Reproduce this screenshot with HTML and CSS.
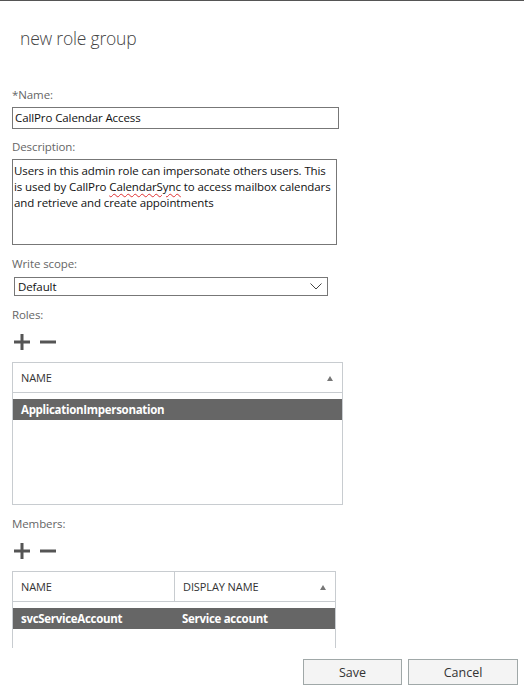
FILE: index.html
```html
<!DOCTYPE html>
<html>
<head>
<meta charset="utf-8">
<link rel="stylesheet" href="styles.css">
</head>
<body>
<div class="page">
  <div class="scroll">
    <h1 class="title">new role group</h1>
    <div class="field">
      <label class="lbl">*Name:</label>
      <div class="input">CallPro Calendar Access</div>
    </div>
    <div class="field desc">
      <label class="lbl">Description:</label>
      <div class="textarea">Users in this admin role can impersonate others users. This is used by CallPro <span class="spell">CalendarSync</span> to access mailbox calendars and retrieve and create appointments</div>
    </div>
    <div class="field">
      <label class="lbl">Write scope:</label>
      <div class="select"><span>Default</span>
        <svg class="chev" width="12" height="7" viewBox="0 0 12 7"><path d="M0.5 0.5 L6 6 L11.5 0.5" fill="none" stroke="#444" stroke-width="1"/></svg>
      </div>
    </div>
    <div class="field">
      <label class="lbl">Roles:</label>
      <div class="tools">
        <svg width="16" height="16" viewBox="0 0 16 16"><path d="M8 0V16M0 8H16" stroke="#555" stroke-width="3"/></svg>
        <svg width="16" height="16" viewBox="0 0 16 16"><path d="M0 8H16" stroke="#555" stroke-width="3"/></svg>
      </div>
      <div class="grid roles">
        <div class="ghead">
          <div class="gcol full">NAME<span class="sort"></span></div>
        </div>
        <div class="grow sel"><div class="gcell">ApplicationImpersonation</div></div>
      </div>
    </div>
    <div class="field">
      <label class="lbl">Members:</label>
      <div class="tools">
        <svg width="16" height="16" viewBox="0 0 16 16"><path d="M8 0V16M0 8H16" stroke="#555" stroke-width="3"/></svg>
        <svg width="16" height="16" viewBox="0 0 16 16"><path d="M0 8H16" stroke="#555" stroke-width="3"/></svg>
      </div>
      <div class="grid members">
        <div class="ghead">
          <div class="gcol c1">NAME</div>
          <div class="gcol c2">DISPLAY NAME<span class="sort"></span></div>
        </div>
        <div class="grow sel"><div class="gcell c1">svcServiceAccount</div><div class="gcell c2">Service account</div></div>
      </div>
    </div>
  </div>
  <div class="footer">
    <button class="btn save">Save</button>
    <button class="btn cancel">Cancel</button>
  </div>
</div>
</body>
</html>
```
FILE: styles.css
```css
* { box-sizing: border-box; }
html, body { margin: 0; padding: 0; background: #fff; }
body { font-family: "Open Sans", "Noto Sans", sans-serif; font-size: 11.5px; letter-spacing: -0.1px; color: #333; }
.page { width: 524px; height: 689px; border-top: 1px solid #555; display: flex; flex-direction: column; }
.scroll { height: 647px; overflow: hidden; padding-left: 12px; }
.title { margin: 0; padding: 25px 0 0 8px; font-size: 17.5px; font-weight: 300; color: #444; line-height: 24px; height: 86px; letter-spacing: -0.2px; }
.field { display: flex; flex-direction: column; }
.lbl { color: #666; line-height: 16px; height: 16px; }
.input { width: 327px; height: 22px; border: 1px solid #777; margin-top: 4px; padding: 2px 2px; line-height: 16px; color: #111; }
.field + .field { margin-top: 11px; }
.field.desc { margin-top: 10px; }
.textarea { width: 325px; height: 86px; border: 1px solid #777; margin-top: 4px; padding: 3px 1px; line-height: 16px; color: #111; }
.spell { text-decoration: underline wavy #e03030; text-decoration-thickness: 1px; text-underline-offset: 2px; }
.select { width: 314px; height: 19px; border: 1px solid #777; margin: 5px 0 0 2px; padding: 0 3px; display: flex; align-items: center; justify-content: space-between; color: #111; }
.chev { margin-right: 2px; }
.tools { display: flex; gap: 10px; margin: 11px 0 0 2px; height: 16px; align-items: center; }
.grid { border: 1px solid #c8ccd0; margin-top: 12px; }
.roles { width: 331px; height: 143px; }
.members { width: 324px; height: 90px; border-bottom: none; }
.ghead { display: flex; height: 30px; border-bottom: 1px solid #c8ccd0; }
.gcol { display: flex; align-items: center; padding-left: 8px; color: #333; position: relative; font-size: 11px; letter-spacing: -0.1px; }
.full { flex: 1; }
.c1 { width: 161px; }
.c2 { flex: 1; border-left: 1px solid #c8ccd0; }
.sort { position: absolute; right: 9px; top: 13px; width: 0; height: 0; border-left: 3.5px solid transparent; border-right: 3.5px solid transparent; border-bottom: 5px solid #777; }
.grow { display: flex; height: 21px; margin-top: 6px; align-items: center; }
.sel { background: #666; color: #fff; font-weight: 700; letter-spacing: -0.3px; }
.gcell { padding-left: 8px; }
.grow .c2 { border-left: none; }
.footer { display: flex; justify-content: flex-end; gap: 6px; padding: 11px 6px 0 0; }
.btn { height: 26px; border: 1px solid #a0a8a8; background: #f4f4f4; font-family: inherit; font-size: 12.5px; letter-spacing: 0; color: #333; padding: 0; }
.save { width: 99px; }
.cancel { width: 110px; }
```
